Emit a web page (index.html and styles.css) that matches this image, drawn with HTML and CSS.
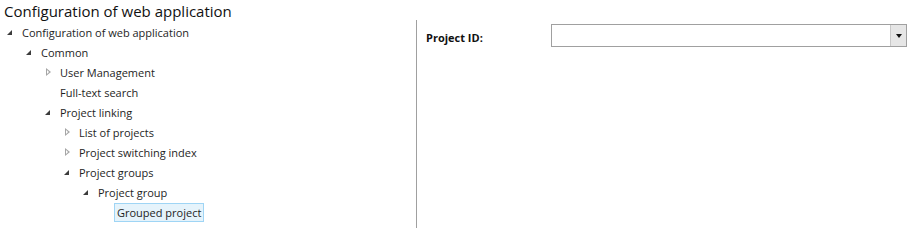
FILE: index.html
```html
<!DOCTYPE html>
<html>
<head>
    <title>Configuration of web application</title>
    <link rel="stylesheet" href="styles.css">
</head>
<body>
    <h1 class="page-title">Configuration of web application</h1>
    <div class="layout">
        <div class="tree-panel">
            <ul class="tree">
                <li>
                    <div class="node"><span class="toggle open"></span><span class="label">Configuration of web application</span></div>
                    <ul>
                        <li>
                            <div class="node"><span class="toggle open"></span><span class="label">Common</span></div>
                            <ul>
                                <li><div class="node"><span class="toggle closed"></span><span class="label">User Management</span></div></li>
                                <li><div class="node"><span class="toggle"></span><span class="label">Full-text search</span></div></li>
                                <li>
                                    <div class="node"><span class="toggle open"></span><span class="label">Project linking</span></div>
                                    <ul>
                                        <li><div class="node"><span class="toggle closed"></span><span class="label">List of projects</span></div></li>
                                        <li><div class="node"><span class="toggle closed"></span><span class="label">Project switching index</span></div></li>
                                        <li>
                                            <div class="node"><span class="toggle open"></span><span class="label">Project groups</span></div>
                                            <ul>
                                                <li>
                                                    <div class="node"><span class="toggle open"></span><span class="label">Project group</span></div>
                                                    <ul>
                                                        <li><div class="node"><span class="toggle"></span><span class="label selected">Grouped project</span></div></li>
                                                    </ul>
                                                </li>
                                            </ul>
                                        </li>
                                    </ul>
                                </li>
                            </ul>
                        </li>
                    </ul>
                </li>
            </ul>
        </div>
        <div class="detail-panel">
            <div class="field">
                <label class="field-label">Project ID:</label>
                <div class="combo">
                    <div class="combo-text"></div>
                    <div class="combo-button"><span class="combo-arrow"></span></div>
                </div>
            </div>
        </div>
    </div>
</body>
</html>
```

FILE: styles.css
```css
body{
    margin: 0px;
    background-color: white;
    color: #1e1e1e;
    font-family: "Open Sans", "Noto Sans", sans-serif;
    font-size: 11px;
}
h1.page-title{
    margin: 0px;
    padding: 0px 4px;
    height: 20px;
    line-height: 22px;
    font-size: 15px;
    font-weight: normal;
    color: #111;
}
div.layout{
    display: flex;
    height: 208px;
}
div.tree-panel{
    width: 416px;
    border-right: 1px solid #a0a0a0;
    padding-top: 2px;
}
ul.tree, ul.tree ul{
    list-style: none;
    margin: 0px;
    padding: 0px;
}
ul.tree{
    padding-left: 4px;
}
ul.tree ul{
    padding-left: 19px;
}
div.node{
    display: flex;
    align-items: center;
    height: 20px;
}
span.toggle{
    width: 12px;
    height: 20px;
    margin-right: 3px;
    position: relative;
}
/* expanded: small filled corner triangle */
span.toggle.open::before{
    content: '';
    position: absolute;
    left: 3px;
    top: 8px;
    width: 0px;
    height: 0px;
    border-left: 5px solid transparent;
    border-bottom: 5px solid #3c3c3c;
}
/* collapsed: hollow right triangle */
span.toggle.closed::before{
    content: '';
    position: absolute;
    left: 4px;
    top: 6px;
    border-top: 4px solid transparent;
    border-bottom: 4px solid transparent;
    border-left: 5px solid #a6a6a6;
}
span.toggle.closed::after{
    content: '';
    position: absolute;
    left: 5px;
    top: 8px;
    border-top: 2px solid transparent;
    border-bottom: 2px solid transparent;
    border-left: 2.5px solid white;
}
span.label{
    padding: 0px 2px;
    border: 1px solid transparent;
    line-height: 17px;
    white-space: nowrap;
}
span.label.selected{
    background-color: #e5f3fb;
    border-color: #9fd5f5;
}
div.detail-panel{
    flex: 1;
    padding: 4px 6px 0px 9px;
}
div.field{
    display: flex;
    align-items: flex-start;
}
label.field-label{
    width: 125px;
    margin-top: 6px;
    line-height: 15px;
    font-weight: bold;
    color: #111;
}
div.combo{
    flex: 1;
    display: flex;
    height: 21px;
    border: 1px solid #a0a0a0;
    background: white;
}
div.combo-text{
    flex: 1;
}
div.combo-button{
    width: 15px;
    background-color: #e6e6e6;
    border-left: 1px solid #c8c8c8;
    display: flex;
    align-items: center;
    justify-content: center;
}
span.combo-arrow{
    width: 0px;
    height: 0px;
    border-left: 3.5px solid transparent;
    border-right: 3.5px solid transparent;
    border-top: 4px solid #111;
}
```
